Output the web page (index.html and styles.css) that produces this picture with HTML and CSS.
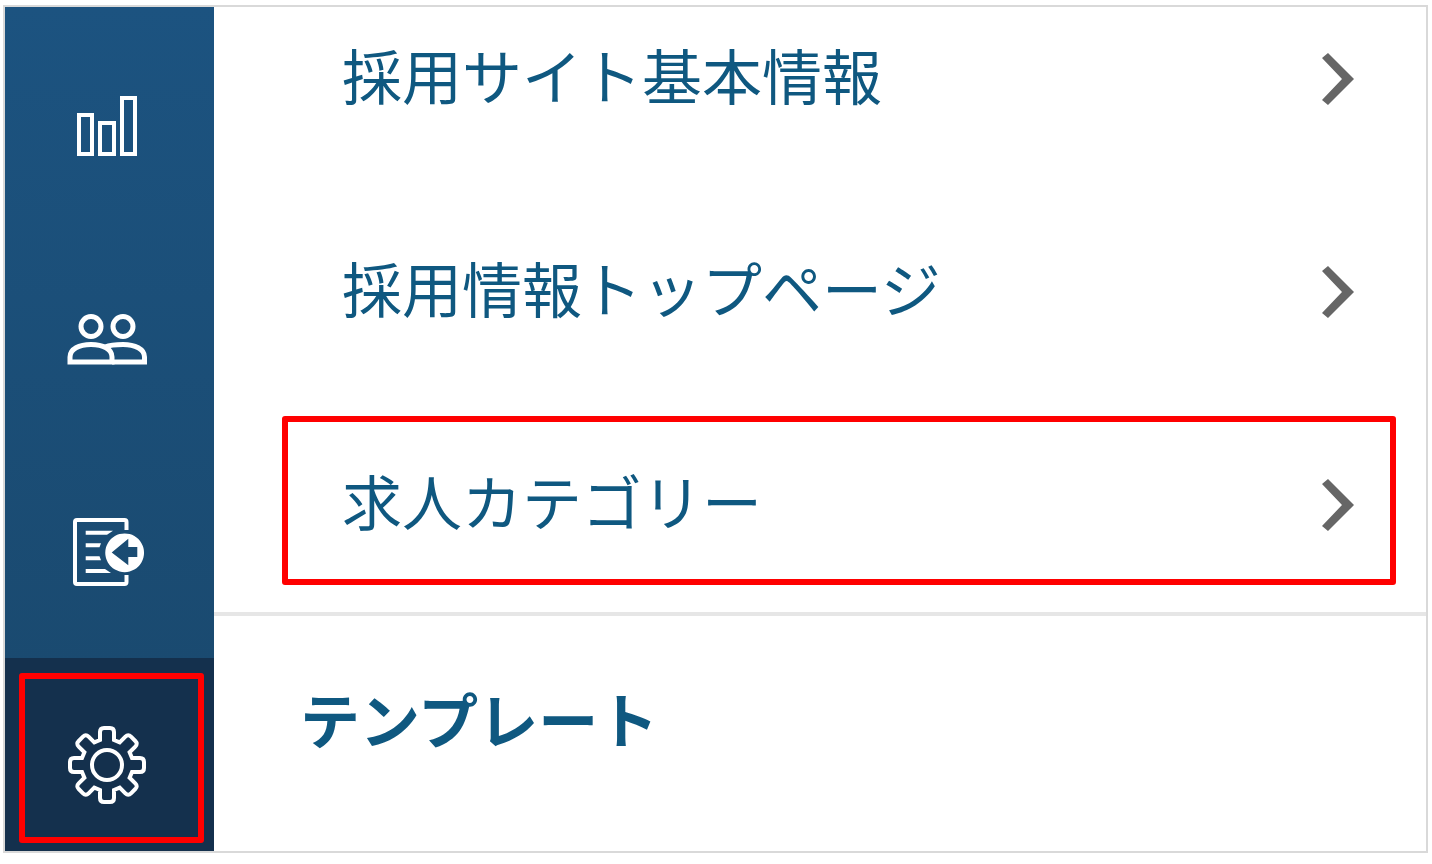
FILE: index.html
```
<!DOCTYPE html>
<html lang="ja">
<head>
    <meta charset="UTF-8">
    <meta name="viewport" content="width=device-width, initial-scale=1.0">
    <title>採用サイト設定</title>
    <link rel="stylesheet" href="styles.css">
</head>
<body>
    <div class="frame">
        <!-- 左側のナビゲーション -->
        <nav class="sidebar">
            <a class="nav-item" href="#" aria-label="レポート">
                <svg class="nav-icon" viewBox="0 0 80 80">
                    <rect x="12" y="29" width="13" height="39"/>
                    <rect x="33" y="37" width="14" height="31"/>
                    <rect x="55" y="12" width="13" height="56"/>
                </svg>
            </a>
            <a class="nav-item" href="#" aria-label="応募者">
                <svg class="nav-icon people" viewBox="0 0 80 80">
                    <circle cx="24" cy="27.5" r="10"/>
                    <circle cx="56" cy="27.5" r="10"/>
                    <path d="M3 63V58C3 50 12 45.500 24 45.500S45 50 45 58V63Z"/>
                    <path d="M38 48C43 46 49 45.500 56 45.500C68 45.500 77.500 50 77.500 58V63H45"/>
                </svg>
            </a>
            <a class="nav-item" href="#" aria-label="求人">
                <svg class="nav-icon" viewBox="0 0 80 80">
                    <path d="M59.500 18V10Q59.500 8 57.500 8H10Q8 8 8 10V70Q8 72 10 72H57.500Q59.500 72 59.500 70V63"/>
                    <path class="fill" d="M18.700 18.700H46L40 22.700H18.700ZM18.700 31.300H34L32.500 35.300H18.700ZM18.700 44.300H32.500L34 48.300H18.700ZM18.700 57H38L44 61H18.700Z"/>
                    <path class="fill" fill-rule="evenodd" d="M57.700 21.400A19.400 19.400 0 1 1 57.600 21.400ZM44.700 40.500L61.300 26.700V35H70.300V45H61.300V53.300Z"/>
                </svg>
            </a>
            <a class="nav-item active" href="#" aria-label="設定">
                <svg class="nav-icon" viewBox="-40 -40 80 80">
                    <circle r="15"/>
                    <path d="M-7-25V-33Q-7-37-3-37H3Q7-37 7-33V-25L12.700-22.600 18.400-28.300Q21.200-31.100 24-28.300L28.300-24Q31.100-21.200 28.300-18.400L22.600-12.700 25-7H33Q37-7 37-3V3Q37 7 33 7H25L22.600 12.700 28.300 18.400Q31.100 21.200 28.300 24L24 28.300Q21.200 31.100 18.400 28.300L12.700 22.600 7 25V33Q7 37 3 37H-3Q-7 37-7 33V25L-12.700 22.600-18.400 28.300Q-21.200 31.100-24 28.300L-28.300 24Q-31.100 21.200-28.300 18.400L-22.600 12.700-25 7H-33Q-37 7-37 3V-3Q-37-7-33-7H-25L-22.600-12.700-28.300-18.400Q-31.100-21.200-28.300-24L-24-28.300Q-21.200-31.100-18.400-28.300L-12.700-22.600Z"/>
                </svg>
                <span class="mark mark-nav"></span>
            </a>
        </nav>

        <main class="content">
            <div class="menu">
                <a class="menu-item" href="#">
                    <span class="menu-text">採用サイト基本情報</span>
                    <svg class="arrow" viewBox="0 0 32 52"><path d="M0 5L6 0L32 26L6 52L0 47L20 26Z"/></svg>
                </a>
                <a class="menu-item" href="#">
                    <span class="menu-text">採用情報トップページ</span>
                    <svg class="arrow" viewBox="0 0 32 52"><path d="M0 5L6 0L32 26L6 52L0 47L20 26Z"/></svg>
                </a>
                <a class="menu-item" href="#">
                    <span class="menu-text">求人カテゴリー</span>
                    <svg class="arrow" viewBox="0 0 32 52"><path d="M0 5L6 0L32 26L6 52L0 47L20 26Z"/></svg>
                    <span class="mark mark-menu"></span>
                </a>
            </div>
            <h2 class="section-title">テンプレート</h2>
        </main>
    </div>
</body>
</html>
```
FILE: styles.css
```
* {
    box-sizing: border-box;
}

body {
    margin: 0;
    padding: 5px 4px 11px 3px;
    background-color: #fff;
    font-family: "Noto Sans CJK JP", sans-serif;
    color: #0f5880;
}

a {
    color: inherit;
    text-decoration: none;
}

.frame {
    display: flex;
    border: 2px solid #d9d9d9;
}

/* サイドバー */
.sidebar {
    flex: none;
    width: 209px;
    padding-top: 12px;
    background: linear-gradient(#1c5380, #1a4a70 78%);
}

.nav-item {
    position: relative;
    display: block;
    padding: 67px 62px 66px;
}

.nav-item.active {
    padding-bottom: 46px;
    background-color: #14304d;
}

.nav-icon {
    display: block;
    width: 80px;
    height: 80px;
    fill: none;
    stroke: #fff;
    stroke-width: 4;
}

.nav-icon.people {
    stroke-width: 5;
}

.nav-icon .fill {
    fill: #fff;
    stroke: none;
}

/* メニュー */
.content {
    flex: 1;
}

.menu {
    display: flex;
    flex-direction: column;
    gap: 69px;
    padding-bottom: 35px;
    border-bottom: 4px solid #e6e6e6;
}

.menu-item {
    position: relative;
    display: flex;
    align-items: center;
    justify-content: space-between;
    padding: 27px 72px 27px 128px;
    font-size: 60px;
    line-height: 80px;
}

.menu-text {
    padding-bottom: 10px;
}

.arrow {
    width: 32px;
    height: 52px;
    fill: #666;
}

.section-title {
    margin: 0;
    padding: 57px 86px 63px;
    font-size: 60px;
    line-height: 90px;
    font-weight: 700;
}

/* 赤い強調枠 */
.mark {
    position: absolute;
    border: 6px solid #f00;
    border-radius: 3px;
}

.mark-nav {
    top: 15px;
    right: 10px;
    bottom: 8px;
    left: 14px;
}

.mark-menu {
    top: -17px;
    right: 30px;
    bottom: -8px;
    left: 68px;
}
```
